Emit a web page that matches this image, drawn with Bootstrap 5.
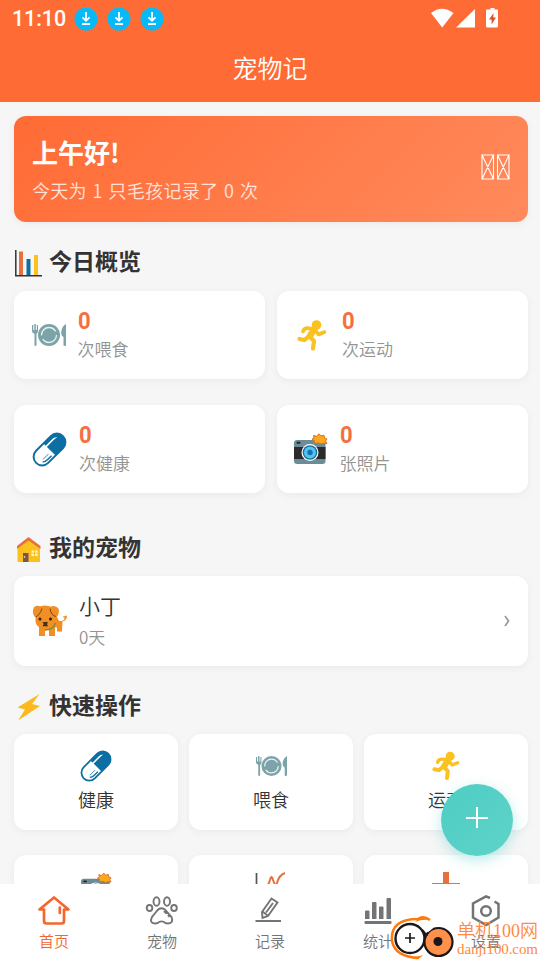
<!DOCTYPE html>
<html lang="zh-CN">
<head>
<meta charset="utf-8">
<meta name="viewport" content="width=device-width, initial-scale=1">
<title>宠物记</title>
<link href="https://cdn.jsdelivr.net/npm/bootstrap@5.3.0/dist/css/bootstrap.min.css" rel="stylesheet">
<style>
body{font-family:Roboto,"Noto Sans CJK SC",sans-serif;background:#f6f6f6;color:#333;width:540px;height:960px;overflow:hidden}
svg{display:block;flex:none}
.app-head{background:#ff6b35;height:102px}
.status-row{height:37px;padding:0 42px 0 12px}
.clock{font-size:21.5px;font-weight:500;line-height:37px;letter-spacing:-.1px;width:62px}
.app-title{font-size:25px;line-height:65px;font-weight:350}
.app-main{padding:14px 12px 0 14px;min-height:0}
.panel{background:#fff;border-radius:12px;box-shadow:0 2px 8px rgba(0,0,0,.05)}
.hello{height:106px;padding:0 18px;background:linear-gradient(135deg,#ff6b35,#ff8a5c)}
.hello-text{padding-top:4px}
.hello-title{font-family:"Noto Sans CJK SC",sans-serif;font-size:26px;font-weight:700;line-height:38px}
.hello-sub{font-family:"Noto Sans CJK SC",sans-serif;font-size:18px;line-height:38px;opacity:.8;letter-spacing:.3px;word-spacing:1.4px;font-weight:350}
.sec-title{font-size:23px;font-weight:700;line-height:34px;gap:7px;margin:0}
.sec-title span{padding-top:1px;line-height:34px;margin-bottom:-1px}
.sec-title svg{margin-top:2px}
.mt-a{margin-top:23px}.mt-b{margin-top:38px}.mt-c{margin-top:23px}
.stat-grid{display:grid;grid-template-columns:1fr 1fr;gap:26px 12px;margin-top:12px}
.stat{height:88px;padding-left:18px}
.stat-num{font-size:24px;font-weight:700;line-height:28px;color:#f4703f;transform-origin:left;transform:scaleX(.92)}
.stat-label{font-size:17px;line-height:30px;color:#939393;font-weight:350;margin-bottom:-1px}
.pet{height:90px;margin-top:11px;padding:0 18px}
.pet-text{margin-left:11px}
.pet-name{font-size:21px;line-height:32px;font-weight:350}
.pet-age{font-family:"Noto Sans CJK SC",sans-serif;font-size:17px;line-height:30px;color:#939393;font-weight:350;margin-top:-1px}
.quick-grid{display:grid;grid-template-columns:repeat(3,1fr);gap:25px 11px;margin-top:11px}
.quick{height:96px;padding-top:16px}
.quick-label{font-size:18px;line-height:26px;margin-top:6px;font-weight:350}
.tabs{height:76px;background:#fff}
.tab{width:108px;padding-top:10px;font-size:15px;line-height:22px;color:#737476;font-weight:350}
.tab.on{color:#f4652f}
.tab svg{margin-bottom:4px}
.fab{position:absolute;left:441px;top:784px;width:72px;height:72px;border-radius:50%;background:linear-gradient(135deg,#4ecdc4,#5fd3c8);box-shadow:0 4px 14px rgba(78,205,196,.4)}
.site-mark{position:absolute;left:388px;top:914px;width:152px;height:46px;color:#ff8a42}
.site-text{font-family:"Liberation Serif","Noto Sans CJK SC",serif;margin-left:3px;white-space:nowrap;font-weight:350}
.site-cn{font-size:18px;line-height:22px;padding-top:6px}
.site-en{font-size:15px;line-height:15px;letter-spacing:-.1px}
</style>
</head>
<body class="d-flex flex-column position-relative">
<svg width="0" height="0" class="position-absolute">
<symbol id="dl" viewBox="0 0 24 24"><circle cx="12" cy="12" r="11.500" fill="#08b9f8"/><path d="M12 5v8.500M8.500 10.300l3.500 3.500 3.500-3.500M8 17h8" fill="none" stroke="#fff" stroke-width="1.800"/></symbol>
<symbol id="plate" viewBox="0 0 34 24"><g fill="#7ba3a8"><circle cx="17" cy="12" r="11"/><path d="M0 2h1.300v5h1V1h1.500v6h1V2H6v6q0 2-1.500 2.800V22q0 1-1 1t-1-1V10.800Q0 10 0 8zM34 1v21q0 1-1.300 1T31.500 22v-8q-2.500-1-2.300-5Q30 3 34 1"/></g><circle cx="17" cy="12" r="7.500" fill="none" stroke="#e8f4f4" stroke-width="1.300" stroke-dasharray="19 4 20 4"/></symbol>
<symbol id="pill" viewBox="0 0 36 36"><g transform="rotate(-45 18 18)"><rect x="-1.500" y="9.200" width="39" height="17.600" rx="8.800" fill="#fff" stroke="#0b6fa4" stroke-width="2"/><path d="M18 9.200h10.700a8.800 8.800 0 0 1 0 17.600H18z" fill="#0b6fa4"/><path d="M15 12.500h13q3 0 4.500 2.300-3-.6-5-.6H15z" fill="#fff"/><path d="M4 22q2 2 5 2h6" fill="none" stroke="#0b6fa4" stroke-width="1.500"/><path d="M6 20.500h8" stroke="#0b6fa4" stroke-width=".8"/></g></symbol>
<symbol id="run" viewBox="0 0 30 31"><circle cx="19.500" cy="5" r="4.800" fill="#fbc11e"/><g fill="none" stroke="#fbc11e" stroke-linecap="round" stroke-linejoin="round"><path d="M17 9l-4 7" stroke-width="6.500"/><path d="M14 8.500Q7 7 6 11.500M18 9.500l3.500 5 6-2.500" stroke-width="3.600"/><path d="M12 16l-4.500 4-5-1M13 17l4 4-1 7.500" stroke-width="4.200"/></g></symbol>
<symbol id="cam" viewBox="0 0 34 32"><rect y="7" width="31.500" height="24" rx="3" fill="#6c8d97"/><path d="M0 14h31.500v12H0z" fill="#2b2b2b"/><rect x="2.500" y="8.800" width="4" height="2" rx="1" fill="#222"/><circle cx="16" cy="19.500" r="8.500" fill="#fff"/><circle cx="16" cy="19.500" r="7.300" fill="#176d99"/><circle cx="16" cy="19.500" r="6" fill="#55c3f2"/><circle cx="16" cy="19.500" r="2.700" fill="#1275ae"/><path d="M19.500 2.500l3 .8L25 .800l2 2.200 3-.8.500 2.800 2.500 1-1.500 2 1.500 2.500-3.500-.3L27 11 24 9.800l-4 .8.500-2.800L18 6.300l2-1.500z" fill="#fba81c" stroke="#dd6e24" stroke-width="1"/></symbol>
<symbol id="plusred" viewBox="0 0 32 32"><path d="M13 1h6v11h11v7H19v13h-6V19H2v-7h11z" fill="#e8703c"/></symbol>
<symbol id="trend" viewBox="0 0 32 32"><path d="M1.500 2v29H31" fill="none" stroke="#555" stroke-width="1.700"/><path d="M3 26l4-6 3 2 5-13q1.500-6 3 0l2 5q1 2 2-2Q24 4 30 2" fill="none" stroke="#e8703c" stroke-width="2"/></symbol>
</svg>

<header class="app-head text-white flex-shrink-0">
 <div class="status-row d-flex align-items-center">
  <div class="clock">11:10</div>
  <div class="d-flex" style="gap:9px"><svg width="24" height="24"><use href="#dl"/></svg><svg width="24" height="24"><use href="#dl"/></svg><svg width="24" height="24"><use href="#dl"/></svg></div>
  <svg class="ms-auto" width="68" height="22" viewBox="0 0 68 22"><path d="M1 5Q12-3.500 23.500 5L12.200 19.500zM45 1v18.500H26z" fill="#fff"/><path d="M58 1.500h2.500V0h4v1.500H67q1 0 1 1V18q0 1.500-1.500 1.500h-9Q56 19.500 56 18V2.500q0-1 .7-1z" fill="#fff"/><path d="M63.500 5l-4.500 6.500h2.600v5l4.400-7h-2.700z" fill="#d8552a"/></svg>
 </div>
 <div class="app-title text-center">宠物记</div>
</header>

<main class="app-main flex-grow-1 overflow-hidden">
 <section class="panel hello d-flex align-items-center justify-content-between text-white">
  <div class="hello-text"><div class="hello-title">上午好!</div><div class="hello-sub">今天为 1 只毛孩记录了 0 次</div></div>
  <svg class="mb-1" width="29" height="26" viewBox="0 0 29 26" fill="none" stroke="#fff" stroke-width="1.100"><path d="M1 1h11.500v24H1zL12.500 25M12.500 1L1 25M16.500 1H28v24H16.500zL28 25M28 1L16.500 25"/></svg>
 </section>

 <h2 class="sec-title d-flex align-items-center mt-a"><svg width="28" height="28" viewBox="0 0 28 28"><path d="M5 2.500h4V26H5z" fill="#e8703c"/><path d="M12.500 10h4v16h-4z" fill="#0b6fa4"/><path d="M20 6h4v20h-4z" fill="#fbc11e"/><path d="M1.800 1v25.700H28" fill="none" stroke="#333" stroke-width="1.500"/></svg><span>今日概览</span></h2>
 <div class="stat-grid">
  <div class="panel stat d-flex align-items-center" style="gap:11.500px"><svg width="34" height="24"><use href="#plate"/></svg><div><div class="stat-num">0</div><div class="stat-label">次喂食</div></div></div>
  <div class="panel stat d-flex align-items-center" style="gap:13px"><svg width="34" height="31"><use href="#run"/></svg><div><div class="stat-num">0</div><div class="stat-label">次运动</div></div></div>
  <div class="panel stat d-flex align-items-center" style="gap:12px"><svg width="35" height="35"><use href="#pill"/></svg><div><div class="stat-num">0</div><div class="stat-label">次健康</div></div></div>
  <div class="panel stat d-flex align-items-center" style="padding-left:16.500px;gap:12px"><svg width="34" height="32"><use href="#cam"/></svg><div><div class="stat-num">0</div><div class="stat-label">张照片</div></div></div>
 </div>

 <h2 class="sec-title d-flex align-items-center mt-b"><svg width="28" height="28" viewBox="0 0 28 28"><path d="M3.500 13L14.500 4 26 13v14H3.500z" fill="#fbc11e"/><path d="M3 14v-3L14.500 2 26.500 11v3l-12-8.500z" fill="#e8703c"/><path d="M9 18h5.500v9H9z" fill="#7b5548"/><circle cx="10.500" cy="22" r=".8" fill="#fff"/><path d="M17.500 15.500h6V21h-6z" fill="#fff5c8"/><path d="M20.500 15.500V21M17.500 18.200h6" stroke="#fbc11e"/></svg><span>我的宠物</span></h2>
 <section class="panel pet d-flex align-items-center">
  <svg width="36" height="32" viewBox="0 0 36 32"><g fill="#f18e24"><path d="M6 2q7-3 14 0l4 8 3 6q6 0 5.500-3l-2-1.500q2 0 4.500-1 0 5-4.500 6l-.5 10h-5v-4h-2v8.500h-6v-6h-4v6h-6v-9Q2 19 4 11z"/><path d="M7 1Q2 0 1 5q-.5 5 2 7 3 0 5-4l2-5zM20 1q6 0 7 4 0 4-2 7-3 0-5-4l-2-5z"/></g><path d="M10 3.500Q8 10 3.500 12M18 3.500q1 7 6 8" fill="none" stroke="#7c461d"/><circle cx="8" cy="14" r="1.500" fill="#222"/><circle cx="18.500" cy="14" r="1.500" fill="#222"/><path d="M10.500 17h5.500l-1 2 1 2.300h-5.500l1.200-2.300z" fill="#48311d"/><path d="M13 25q8 0 10.500-7" fill="none" stroke="#6d8c4a" stroke-width="1.300"/></svg>
  <div class="pet-text"><div class="pet-name">小丁</div><div class="pet-age">0天</div></div>
  <svg class="ms-auto" width="6" height="12" viewBox="0 0 6 12"><path d="M1 1l3.500 5L1 11" fill="none" stroke="#999" stroke-width="1.700"/></svg>
 </section>

 <h2 class="sec-title d-flex align-items-center mt-c"><svg width="28" height="28" viewBox="0 0 28 28"><path d="M25.500 1L3.500 14.500l7.500 2L4 27.500l22-14.500-8-2z" fill="#fbb91f"/></svg><span>快速操作</span></h2>
 <div class="quick-grid">
  <div class="panel quick d-flex flex-column align-items-center"><svg width="32" height="32"><use href="#pill"/></svg><div class="quick-label">健康</div></div>
  <div class="panel quick d-flex flex-column align-items-center"><svg width="31" height="32"><use href="#plate"/></svg><div class="quick-label">喂食</div></div>
  <div class="panel quick d-flex flex-column align-items-center"><svg width="28" height="32"><use href="#run"/></svg><div class="quick-label">运动</div></div>
  <div class="panel quick d-flex flex-column align-items-center"><svg width="31" height="32"><use href="#cam"/></svg></div>
  <div class="panel quick d-flex flex-column align-items-center"><svg width="32" height="32"><use href="#trend"/></svg></div>
  <div class="panel quick d-flex flex-column align-items-center"><svg width="32" height="32"><use href="#plusred"/></svg></div>
 </div>
</main>

<nav class="tabs d-flex flex-shrink-0">
 <div class="tab on d-flex flex-column align-items-center"><svg width="34" height="33" viewBox="0 0 34 33"><path d="M2.500 15.500L17 3.500l14.500 12H27V27q0 2.500-2.500 2.500h-15Q7 29.500 7 27V15.500zM22.800 13.500v5.500" fill="none" stroke="currentColor" stroke-width="2.700" stroke-linecap="round" stroke-linejoin="round"/></svg>首页</div>
 <div class="tab d-flex flex-column align-items-center"><svg width="34" height="33" viewBox="0 0 34 33"><g fill="none" stroke="currentColor" stroke-width="1.900"><ellipse cx="11.500" cy="7.500" rx="3" ry="4.300"/><ellipse cx="22" cy="7.500" rx="3" ry="4.300"/><ellipse cx="4.500" cy="14" rx="2.800" ry="3"/><ellipse cx="29" cy="14" rx="2.800" ry="3"/><path d="M11 18q5.500-7.500 11 0l4.500 5q2.500 6-3.500 6.500-3 0-4-1.500-2.500-1.200-5 0-1 1.500-4 1.500-6-.5-3-6.500zM19 17l2.500 2.500M23 21l1.500 2"/></g></svg>宠物</div>
 <div class="tab d-flex flex-column align-items-center"><svg width="34" height="33" viewBox="0 0 34 33" fill="none" stroke="currentColor" stroke-width="1.900"><path d="M2.500 27h25.500M9.500 24l-.5-6L18.500 4.500l6 4L15 22zM9.500 17.500l5.500 4.200M13 18.500l7-9.500"/></svg>记录</div>
 <div class="tab d-flex flex-column align-items-center"><svg width="34" height="33" viewBox="0 0 34 33" fill="currentColor"><path d="M4 17.500q0-1 1-1h2.500q1 0 1 1V25H4zM11 9q0-1 1-1h2.500q1 0 1 1v16H11zM18 13.500q0-1 1-1h2.500q1 0 1 1V25H18zM25.500 5q0-1 1-1H29q1 0 1 1v20h-4.500z"/><rect x="3.500" y="27" width="27" height="3" rx="1"/></svg>统计</div>
 <div class="tab d-flex flex-column align-items-center"><svg width="34" height="33" viewBox="0 0 34 33" fill="none" stroke="currentColor" stroke-width="2.500"><path d="M21 4L17 2.300 4 9.500v14l13 7.500 12.500-7.500V10L25.500 7.500"/><circle cx="17" cy="17" r="4.800"/></svg>设置</div>
</nav>

<div class="fab d-flex align-items-center justify-content-center"><svg class="mb-1" width="22" height="22" viewBox="0 0 22 22"><path d="M11 0v21M0 11h22" stroke="#fff" stroke-width="2"/></svg></div>

<div class="site-mark d-flex">
 <svg width="66" height="46" viewBox="0 0 66 46"><path d="M42 6Q35 1 30 5 2 5 4 27q3 16 27 17" fill="none" stroke="#ff7a0a" stroke-width="2.500"/><path d="M30 5q6-4 12 1-8-1-15 2zM22 43q8 0 13-2-4 5-8 4z" fill="#ff7a0a"/><circle cx="22" cy="24.500" r="14.500" fill="#fff" stroke="#1d1719" stroke-width="2.400"/><path d="M22 19v10M17 24h10" stroke="#1d1719" stroke-width="1.700"/><circle cx="50.500" cy="28" r="14" fill="#ff914d" stroke="#1d1719" stroke-width="2.200"/><circle cx="50" cy="27.500" r="4.500" fill="#1d1719"/><path d="M34 16l5 6" stroke="#1d1719" stroke-width="2.500"/><path d="M39 17l5-4" stroke="#fff" stroke-width="3"/></svg>
 <div class="site-text"><div class="site-cn">单机100网</div><div class="site-en">danji100.com</div></div>
</div>
<script src="https://cdn.jsdelivr.net/npm/bootstrap@5.3.0/dist/js/bootstrap.bundle.min.js"></script>
</body>
</html>
